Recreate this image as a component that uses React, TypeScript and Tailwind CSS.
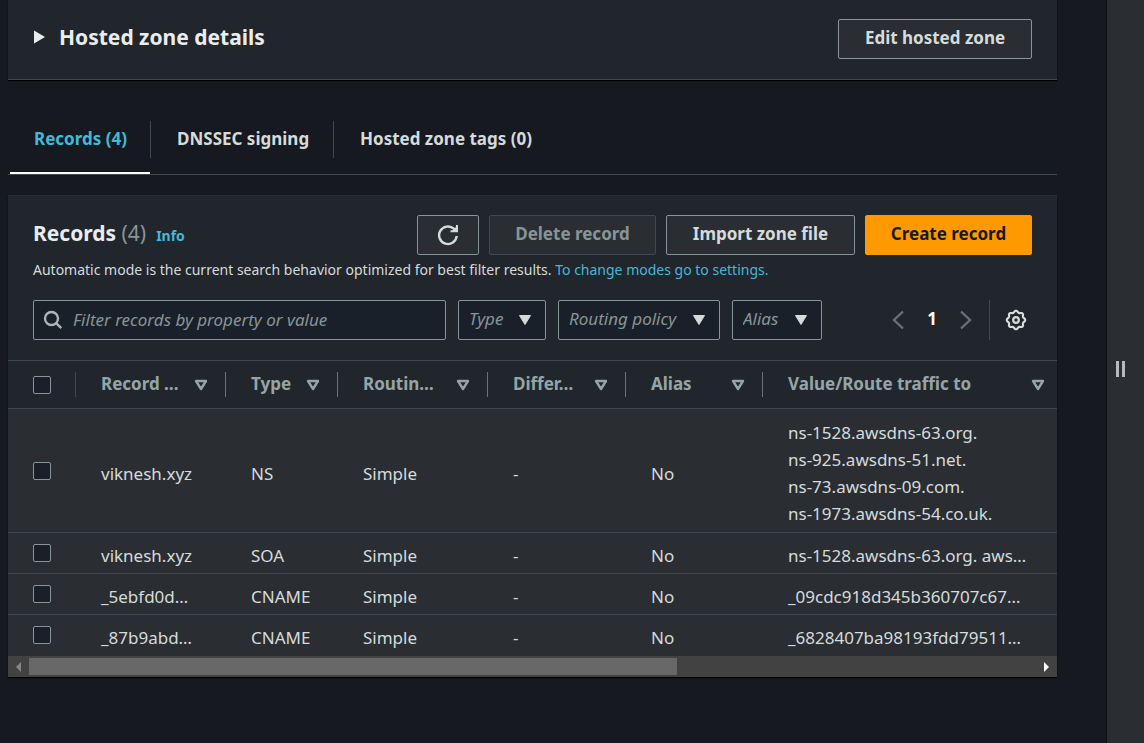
import React from "react";

const TITLE = "text-[21px] leading-7 font-bold text-[#eaeded]";
const BUTTON =
  "flex h-10 shrink-0 items-center justify-center rounded-[2px] border text-[17px] leading-6 font-bold whitespace-nowrap";
const BUTTON_NORMAL = "border-[#879596] bg-[#2a2e33] text-[#d5dbdb]";

function RefreshIcon() {
  return (
    <svg className="shrink-0" width="22" height="22" viewBox="0 0 22 22" fill="none" stroke="currentColor" strokeWidth="2.4" aria-hidden="true">
      <path d="M19.700 12A8.800 8.800 0 1 1 16.800 4.700L19 7" />
      <path d="M13.500 7.200h6.500V1" strokeWidth="2" />
      <path d="M14.500 7.500L20 2v5.500z" fill="currentColor" stroke="none" />
    </svg>
  );
}

function SearchIcon() {
  return (
    <svg className="shrink-0" width="20" height="20" viewBox="0 0 20 20" fill="none" stroke="currentColor" strokeWidth="2.4" aria-hidden="true">
      <circle cx="8.500" cy="8.500" r="6.500" />
      <path d="M13.200 13.200l5 5" />
    </svg>
  );
}

const gearOutline =
  Array.from({ length: 96 }, (_, i) => {
    const angle = (i / 96) * Math.PI * 2;
    const radius = 8.4 + 0.8 * Math.cos(8 * angle);
    const x = 11 + radius * Math.cos(angle);
    const y = 11 + radius * Math.sin(angle);
    return `${i === 0 ? "M" : "L"}${x.toFixed(2)} ${y.toFixed(2)}`;
  }).join("") + "z";

function GearIcon() {
  return (
    <svg className="block" width="22" height="22" viewBox="0 0 22 22" fill="none" stroke="currentColor" strokeWidth="2.200" aria-hidden="true">
      <path strokeLinejoin="round" d={gearOutline} />
      <circle cx="11" cy="11" r="2.800" />
    </svg>
  );
}

function CaretFilled() {
  return (
    <svg width="14" height="12" viewBox="0 0 14 12" fill="currentColor" stroke="currentColor" strokeLinejoin="round" aria-hidden="true">
      <path d="M1.500 1.500h11L7 10.500z" />
    </svg>
  );
}

function CaretHollow() {
  return (
    <svg width="14" height="12" viewBox="0 0 14 12" fill="none" stroke="currentColor" strokeWidth="2.400" strokeLinejoin="round" aria-hidden="true">
      <path d="M2 2h10L7 10z" />
    </svg>
  );
}

function Chevron({ d }: { d: string }) {
  return (
    <svg className="block" width="14" height="20" viewBox="0 0 14 20" fill="none" stroke="currentColor" strokeWidth="2.400" aria-hidden="true">
      <path d={d} />
    </svg>
  );
}

function Filter({ label, width }: { label: string; width: string }) {
  return (
    <label className={`grid h-10 shrink-0 items-center rounded-[2px] border border-[#879596] bg-[#1a2029] ${width}`}>
      <select
        aria-label={label}
        className="h-full w-full appearance-none bg-transparent pr-8 pb-[2px] pl-[10px] text-[17px] text-[#879596] italic [grid-area:1/1]"
      >
        <option>{label}</option>
      </select>
      <span className="pointer-events-none justify-self-end pr-[13px] text-[#d5dbdb] [grid-area:1/1]">
        <CaretFilled />
      </span>
    </label>
  );
}

function Check({ label }: { label: string }) {
  return (
    <input
      type="checkbox"
      aria-label={label}
      className="block size-[18px] appearance-none rounded-[2px] border border-[#879596] bg-[#1a2029] checked:bg-[#44b9d6]"
    />
  );
}

const columns = [
  { label: "Record …", width: "w-[150px]" },
  { label: "Type", width: "w-[112px]" },
  { label: "Routin…", width: "w-[150px]" },
  { label: "Differ…", width: "w-[138px]" },
  { label: "Alias", width: "w-[137px]" },
  { label: "Value/Route traffic to", width: "" },
];

const records = [
  {
    name: "viknesh.xyz",
    type: "NS",
    values: ["ns-1528.awsdns-63.org.", "ns-925.awsdns-51.net.", "ns-73.awsdns-09.com.", "ns-1973.awsdns-54.co.uk."],
  },
  { name: "viknesh.xyz", type: "SOA", values: ["ns-1528.awsdns-63.org. aws…"] },
  { name: "_5ebfd0d…", type: "CNAME", values: ["_09cdc918d345b360707c67…"] },
  { name: "_87b9abd…", type: "CNAME", values: ["_6828407ba98193fdd79511…"] },
];

function RecordsTable() {
  return (
    <table className="w-full table-fixed border-separate border-spacing-0 text-left text-[17px]">
      <thead>
        <tr className="h-[49px] text-[#95a5a6]">
          <th className="w-[68px] border-y border-[#414750] p-0">
            <div className="flex h-[25px] items-center border-r border-[#414750] pl-[25px]">
              <Check label="Select all records" />
            </div>
          </th>
          {columns.map((c, i) => (
            <th key={c.label} className={`border-y border-[#414750] p-0 font-bold ${c.width}`}>
              <div
                className={`flex h-[25px] items-center justify-between pl-[25px] ${
                  i < columns.length - 1 ? "border-r border-[#687078] pr-[17px]" : "pr-3"
                }`}
              >
                <span className="pb-[2px] whitespace-nowrap">{c.label}</span>
                <button type="button" aria-label={`Sort by ${c.label}`}>
                  <CaretHollow />
                </button>
              </div>
            </th>
          ))}
        </tr>
      </thead>
      <tbody className="bg-[#2a2e33] leading-[27px] text-[#d5dbdb] [&_td]:border-b [&_td]:border-[#414750] [&_tr:last-child_td]:border-transparent">
        {records.map((r, i) => (
          <tr key={i} className={r.values.length > 1 ? "h-[124px]" : "h-10"}>
            <td className="pl-[25px]">
              <Check label={`Select ${r.name} ${r.type}`} />
            </td>
            {[r.name, r.type, "Simple", "-", "No"].map((cell, j) => (
              <td key={j} className="pt-[9px] pb-[4px] pl-[25px] whitespace-nowrap">
                {cell}
              </td>
            ))}
            <td className="pt-[9px] pb-[4px] pl-[25px] whitespace-nowrap">
              {r.values.map((v) => (
                <div key={v}>{v}</div>
              ))}
            </td>
          </tr>
        ))}
      </tbody>
    </table>
  );
}

export default function App() {
  return (
    <div className="flex min-h-screen bg-[#16191f] font-['Noto_Sans',sans-serif] text-[#d5dbdb]">
      <main className="min-w-0 flex-1 pr-[49px] pb-16 pl-2">
        <section className="flex items-start justify-between border-b border-[#414750] bg-[#21252c] pt-[19px] pr-[25px] pb-5 pl-[26px] shadow-[0_1px_1px_#000]">
          <h2 className="pt-1">
            <button type="button" className={`flex items-center gap-[14px] ${TITLE}`}>
              <svg width="11" height="14" viewBox="0 0 11 14" fill="currentColor" aria-hidden="true">
                <path d="M0 0.500L11 7 0 13.500z" />
              </svg>
              Hosted zone details
            </button>
          </h2>
          <button type="button" className={`${BUTTON} ${BUTTON_NORMAL} w-[194px] pb-[2px]`}>
            Edit hosted zone
          </button>
        </section>

        <div role="tablist" className="mt-6 flex h-[71px] border-b border-[#414750] text-[17px] font-bold">
          <button type="button" role="tab" aria-selected="true" className="ml-[2px] flex w-[141px] flex-col pt-[17px] text-[#44b9d6]">
            <span className="flex h-[37px] w-full items-center border-r border-[#414750] pb-[2px] pl-6 whitespace-nowrap">Records (4)</span>
            <span className="mt-[14px] h-[2px] w-[140px] bg-white" />
          </button>
          <button type="button" role="tab" aria-selected="false" className="w-[183px] pt-[17px] pb-4">
            <span className="flex h-[37px] items-center border-r border-[#414750] pb-[2px] pl-[26px] whitespace-nowrap">DNSSEC signing</span>
          </button>
          <button type="button" role="tab" aria-selected="false" className="pt-[17px] pb-4">
            <span className="flex h-[37px] items-center pb-[2px] pl-[26px] whitespace-nowrap">Hosted zone tags (0)</span>
          </button>
        </div>

        <section className="mt-5 border-t border-[#2a2e33] bg-[#21252c] shadow-[0_1px_1px_#000]">
          <div className="px-[25px] pt-[19px] pb-5">
            <div className="flex items-start justify-between">
              <div className="flex items-baseline pt-1">
                <h2 className={TITLE}>
                  Records <span className="font-normal text-[#879596]">(4)</span>
                </h2>
                <a href="#info" className="ml-[10px] text-[14px] font-bold text-[#44b9d6]">
                  Info
                </a>
              </div>
              <div className="flex gap-[10px]">
                <button type="button" aria-label="Refresh" className={`${BUTTON} ${BUTTON_NORMAL} w-[62px]`}>
                  <RefreshIcon />
                </button>
                <button type="button" disabled className={`${BUTTON} w-[167px] border-[#414750] bg-[#2a2e33] pb-[2px] text-[#879596]`}>
                  Delete record
                </button>
                <button type="button" className={`${BUTTON} ${BUTTON_NORMAL} w-[189px] pb-[2px]`}>
                  Import zone file
                </button>
                <button type="button" className={`${BUTTON} w-[167px] border-[#ff9900] bg-[#ff9900] pb-[2px] text-[#16191f]`}>
                  Create record
                </button>
              </div>
            </div>
            <p className="mt-1 text-[14px] leading-[22px]">
              Automatic mode is the current search behavior optimized for best filter results.{" "}
              <a href="#settings" className="text-[#44b9d6]">
                To change modes go to settings.
              </a>
            </p>
            <div className="mt-[19px] flex items-center">
              <label className="flex h-10 min-w-0 flex-1 items-center gap-[10px] rounded-[2px] border border-[#879596] bg-[#1a2029] px-[9px] text-[#aab7b8]">
                <SearchIcon />
                <input
                  type="search"
                  aria-label="Filter records"
                  placeholder="Filter records by property or value"
                  className="min-w-0 flex-1 bg-transparent text-[17px] text-[#d5dbdb] outline-none placeholder:text-[#879596] placeholder:italic"
                />
              </label>
              <div className="ml-3 flex gap-3">
                <Filter label="Type" width="w-[88px]" />
                <Filter label="Routing policy" width="w-[162px]" />
                <Filter label="Alias" width="w-[90px]" />
              </div>
              <nav aria-label="Pages" className="ml-[69px] flex items-center text-[#687078]">
                <button type="button" aria-label="Previous page">
                  <Chevron d="M12 1.500L3 10l9 8.500" />
                </button>
                <button type="button" className="w-[54px] pb-[2px] text-[17px] font-bold text-white">
                  1
                </button>
                <button type="button" aria-label="Next page">
                  <Chevron d="M2 1.500L11 10l-9 8.500" />
                </button>
              </nav>
              <div className="ml-4 flex h-10 items-center border-l border-[#414750] pr-[5px] pl-[15px]">
                <button type="button" aria-label="Preferences">
                  <GearIcon />
                </button>
              </div>
            </div>
          </div>

          <RecordsTable />

          <div className="flex h-[21px] items-center bg-[#424242]">
            <button type="button" aria-label="Scroll left" className="flex w-[21px] justify-center text-[#868686]">
              <svg width="5" height="10" viewBox="0 0 5 10" fill="currentColor" aria-hidden="true">
                <path d="M5 0v10L0 5z" />
              </svg>
            </button>
            <div className="flex-1">
              <div className="h-[17px] w-[64.3%] bg-[#686868]" />
            </div>
            <button type="button" aria-label="Scroll right" className="flex w-[21px] justify-center text-white">
              <svg width="5" height="10" viewBox="0 0 5 10" fill="currentColor" aria-hidden="true">
                <path d="M0 0v10l5-5z" />
              </svg>
            </button>
          </div>
        </section>
      </main>

      <aside className="flex w-[38px] shrink-0 items-center justify-center border-l border-[#0f1114] bg-[#2a2e33] pr-[10px] pb-[6px]">
        <button type="button" aria-label="Resize panel" className="flex gap-[3px]">
          <span className="h-4 w-[3px] bg-[#b5bbbb]" />
          <span className="h-4 w-[3px] bg-[#b5bbbb]" />
        </button>
      </aside>
    </div>
  );
}
